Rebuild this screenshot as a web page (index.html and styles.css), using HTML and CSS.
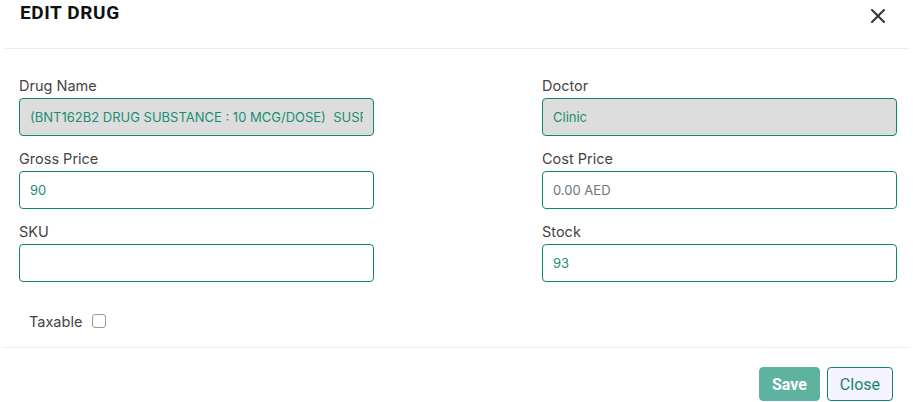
FILE: index.html
```html
<!DOCTYPE html>
<html lang="en">

<head>
    <meta charset="UTF-8">
    <meta name="viewport" content="width=device-width, initial-scale=1.0">
    <title>Edit Drug</title>
    <link rel="stylesheet" href="styles.css">
</head>

<body>
    <div class="modal">
        <div class="modal-header">
            <h1 class="modal-title">EDIT DRUG</h1>
            <button type="button" class="btn-close" aria-label="Close">
                <svg width="16" height="16" viewBox="0 0 16 16">
                    <path d="M2 2 L14 14 M14 2 L2 14" stroke="#333" stroke-width="2" stroke-linecap="round" fill="none"/>
                </svg>
            </button>
        </div>
        <form class="modal-body">
            <div class="grid">
                <div class="field">
                    <label for="drugName">Drug Name</label>
                    <input type="text" id="drugName" class="readonly" value="(BNT162B2 DRUG SUBSTANCE : 10 MCG/DOSE)  SUSPENSION FOR INJECTION" readonly>
                </div>
                <div class="field">
                    <label for="doctor">Doctor</label>
                    <input type="text" id="doctor" class="readonly" value="Clinic" readonly>
                </div>
                <div class="field">
                    <label for="grossPrice">Gross Price</label>
                    <input type="text" id="grossPrice" value="90">
                </div>
                <div class="field">
                    <label for="costPrice">Cost Price</label>
                    <input type="text" id="costPrice" placeholder="0.00 AED">
                </div>
                <div class="field">
                    <label for="sku">SKU</label>
                    <input type="text" id="sku">
                </div>
                <div class="field">
                    <label for="stock">Stock</label>
                    <input type="text" id="stock" value="93">
                </div>
            </div>
            <div class="check-row">
                <label for="taxable">Taxable</label>
                <span class="checkbox" id="taxable"></span>
            </div>
        </form>
        <div class="modal-footer">
            <button type="button" class="btn btn-save">Save</button>
            <button type="button" class="btn btn-close-outline">Close</button>
        </div>
    </div>
</body>

</html>
```

FILE: styles.css
```css
/* Modal editar medicamento */
body {
    font-family: Inter, "Noto Sans", sans-serif;
    margin: 0;
    padding: 0;
    background-color: #fff;
}

.modal {
    margin: 0 4px;
}

.modal-header {
    height: 48px;
    display: flex;
    justify-content: space-between;
    align-items: flex-start;
    padding: 0 16px;
    border-bottom: 1px solid #e9ecef;
}

.modal-title {
    font-family: Roboto, "Liberation Sans", sans-serif;
    font-size: 19px;
    font-weight: 700;
    margin: 1px 0 0 0;
    line-height: 24px;
    color: #111;
    letter-spacing: 0.6px;
}

.btn-close {
    background: none;
    border: none;
    padding: 0;
    margin: 8px 7px 0 0;
    width: 16px;
    height: 16px;
    cursor: pointer;
}

.modal-body {
    padding: 27px 12px 0 15px;
}

.grid {
    display: grid;
    grid-template-columns: 355px 355px;
    justify-content: space-between;
    row-gap: 13px;
}

.field label {
    display: block;
    font-size: 14.5px;
    line-height: 20px;
    color: #444;
    margin-bottom: 2px;
}

.field input {
    width: 100%;
    height: 38px;
    padding: 0 10px;
    border: 1px solid #11876b;
    border-radius: 4px;
    box-sizing: border-box;
    font-family: Inter, "Noto Sans", sans-serif;
    font-size: 13px;
    color: #1a8f72;
    background-color: #fff;
    outline: none;
}

.field input::placeholder {
    color: #6c757d;
}

.field input.readonly {
    background-color: #dddddd;
}

.check-row {
    display: flex;
    align-items: center;
    gap: 10px;
    padding: 29px 0 16px 10px;
    height: 20px;
}

.check-row label {
    font-size: 14.5px;
    color: #444;
}

.checkbox {
    width: 12px;
    height: 12px;
    border: 1px solid #9a9a9a;
    border-radius: 3px;
    background-color: #fff;
}

.modal-footer {
    border-top: 1px solid #e9ecef;
    display: flex;
    justify-content: flex-end;
    gap: 7px;
    padding: 19px 16px 0 0;
}

.btn {
    height: 34px;
    padding: 0 12px;
    border-radius: 4px;
    font-family: Roboto, "Liberation Sans", sans-serif;
    font-size: 16px;
    cursor: pointer;
}

.btn-save {
    background-color: #5eb3a0;
    border: 1px solid #5eb3a0;
    color: #fff;
    font-weight: 700;
}

.btn-close-outline {
    background-color: #f5f3ff;
    border: 1px solid #11876b;
    color: #11876b;
}
```
